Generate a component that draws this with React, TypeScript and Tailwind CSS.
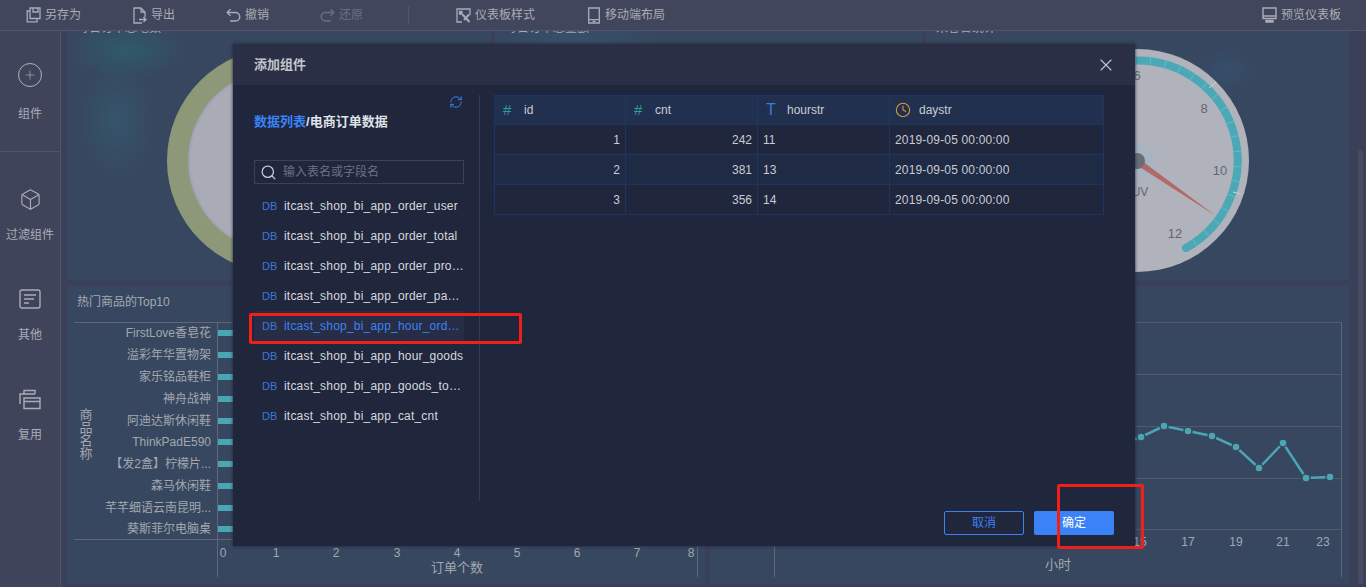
import { Box, Clock, Plus, RefreshCw, Search, X } from "lucide-react";

const FONT = "font-['Liberation_Sans','Noto_Sans_CJK_SC',sans-serif]";

const SaveIcon = () => (
  <svg width="15" height="16" viewBox="0 0 15 16" fill="none" stroke="currentColor" strokeWidth="1.3">
    <path d="M4 1h10v10.5H4z" />
    <path d="M4 4H1.2v10.8h9.8V11.5" />
    <path d="M7 1v4h5V1" />
  </svg>
);

const ExportIcon = () => (
  <svg width="14" height="17" viewBox="0 0 14 17" fill="none" stroke="currentColor" strokeWidth="1.3">
    <path d="M8 1H1v15h8M8 1l4 4v5M8 1v4h4" />
    <path d="M6 12.5h7M10.5 10l2.5 2.5-2.5 2.5" />
  </svg>
);

const UndoIcon = ({ flip }: { flip?: boolean }) => (
  <svg width="15" height="15" viewBox="0 0 15 15" fill="none" stroke="currentColor" strokeWidth="1.4" className={flip ? "-scale-x-100" : ""}>
    <path d="M1.5 4.5h8a4 4 0 0 1 0 8.5H4" />
    <path d="M4.5 1.2 1.2 4.5l3.3 3.3" />
  </svg>
);

const StyleIcon = () => (
  <svg width="15" height="15" viewBox="0 0 15 15" fill="none" stroke="currentColor" strokeWidth="1.3">
    <path d="M6 14H1V1h13v6" />
    <path d="M3.5 3.5h2.5v2.5H3.5z" fill="currentColor" />
    <path d="M6.5 6.5 13.5 14M13 6.5 8 12" strokeWidth="2" />
  </svg>
);

const MobileIcon = () => (
  <svg width="14" height="17" viewBox="0 0 14 17" fill="none" stroke="currentColor" strokeWidth="1.3">
    <path d="M1.7 1h10.6v15H1.7zM1.7 12.6h10.6M5.5 14.4h3" />
  </svg>
);

const MonitorIcon = () => (
  <svg width="15" height="16" viewBox="0 0 15 16" fill="none" stroke="currentColor" strokeWidth="1.4">
    <path d="M1 1h13v10.5H1z" />
    <path d="M1 9h13M4 13.5h7v1.5H4z" />
  </svg>
);

const OtherIcon = () => (
  <svg width="22" height="20" viewBox="0 0 22 20" fill="none" stroke="currentColor" strokeWidth="1.4">
    <rect x="1" y="1" width="20" height="18" rx="2" />
    <path d="M5 6h12M5 10h10M5 14h5" />
  </svg>
);

const ReuseIcon = () => (
  <svg width="22" height="21" viewBox="0 0 22 21" fill="none" stroke="currentColor" strokeWidth="1.4">
    <path d="M5 5V1.5h11V5M1 15V5h15M5 19.5V9h16v10.5zM5 12.5h16" />
  </svg>
);

const toolbarItems = [
  { label: "另存为", icon: <SaveIcon />, cls: "ml-[26px]" },
  { label: "导出", icon: <ExportIcon />, cls: "ml-[52px]" },
  { label: "撤销", icon: <UndoIcon />, cls: "ml-[51px]" },
  { label: "还原", icon: <UndoIcon flip />, cls: "ml-[51px] opacity-40" },
];

const sideItems = [
  { label: "过滤组件", icon: <Box size={23} strokeWidth={1.2} /> },
  { label: "其他", icon: <OtherIcon /> },
  { label: "复用", icon: <ReuseIcon /> },
];

const tables = [
  "itcast_shop_bi_app_order_user",
  "itcast_shop_bi_app_order_total",
  "itcast_shop_bi_app_order_product",
  "itcast_shop_bi_app_order_payment",
  "itcast_shop_bi_app_hour_orders",
  "itcast_shop_bi_app_hour_goods",
  "itcast_shop_bi_app_goods_top10",
  "itcast_shop_bi_app_cat_cnt",
];

const rows = [
  ["1", "242", "11", "2019-09-05 00:00:00"],
  ["2", "381", "13", "2019-09-05 00:00:00"],
  ["3", "356", "14", "2019-09-05 00:00:00"],
];

const goods = [
  ["FirstLove香皂花", 333],
  ["溢彩年华置物架", 355],
  ["家乐铭品鞋柜", 377],
  ["神舟战神", 399],
  ["阿迪达斯休闲鞋", 421],
  ["ThinkPadE590", 442],
  ["【发2盒】柠檬片...", 464],
  ["森马休闲鞋", 486],
  ["芊芊细语云南昆明...", 508],
  ["葵斯菲尔电脑桌", 529],
] as const;

const xTicks = [[223, "0"], [276, "1"], [336, "2"], [397, "3"], [457, "4"], [517, "5"], [577, "6"], [637, "7"], [691, "8"]] as const;
const hourTicks = [[1140, "15"], [1188, "17"], [1236, "19"], [1283, "21"], [1323, "23"]] as const;
const linePoints = [[1116, 446], [1141, 437], [1164, 426], [1188, 431], [1212, 436], [1236, 447], [1259, 468], [1283, 443], [1306, 478], [1330, 477]];

const Panel = ({ title, className, children }: { title: string; className?: string; children: React.ReactNode }) => (
  <div className={`overflow-hidden bg-[#37475f] ${className ?? ""}`}>
    <div className="pl-[10px] text-xs leading-4 text-[#a5a9b3]">{title}</div>
    {children}
  </div>
);

const BarChart = () => (
  <svg width="638" height="264" viewBox="67 320 638 264" className="block" fontSize="12" fill="#a3a7b0">
    <path d="M74 322.5H697M74 539.5H697M217.5 322V577M697.5 322V577" stroke="#5f6675" fill="none" />
    {goods.map(([name, y]) => (
      <g key={name}>
        <text x="211" y={y + 4} textAnchor="end">{name}</text>
        <rect x="218" y={y - 3} width="30" height="6" fill="#4ba6b4" />
      </g>
    ))}
    {["商", "品", "名", "称"].map((c, i) => (
      <text key={c} x="86" y={419 + i * 13} textAnchor="middle" fontSize="13">{c}</text>
    ))}
    {xTicks.map(([x, t]) => (
      <text key={t} x={x} y="557" textAnchor="middle" fontSize="12">{t}</text>
    ))}
    <text x="457" y="572" textAnchor="middle" fontSize="13">订单个数</text>
  </svg>
);

const LineChart = () => (
  <svg width="639" height="264" viewBox="710 320 639 264" className="block" fontSize="12" fill="#a3a7b0">
    <path d="M774 322.5H1341M774 374.5H1341M774 426.5H1341M774 478.5H1341M774 529.5H1341" stroke="#545a69" fill="none" />
    <path d="M774.5 322V577M1341.5 322V577" stroke="#5f6675" fill="none" />
    <polyline points={linePoints.map((p) => p.join(",")).join(" ")} fill="none" stroke="#4ba6b4" strokeWidth="2.5" />
    {linePoints.map(([x, y]) => (
      <circle key={x} cx={x} cy={y} r="4" fill="#4ba6b4" stroke="#3a4660" strokeWidth="1.5" />
    ))}
    {hourTicks.map(([x, t]) => (
      <text key={t} x={x} y="546" textAnchor="middle">{t}</text>
    ))}
    <text x="1058" y="569" textAnchor="middle" fontSize="13">小时</text>
  </svg>
);

const DonutChart = () => (
  <svg width="424" height="244" viewBox="67 36 424 244" className="block">
    <circle cx="279.6" cy="160.5" r="112.6" fill="#8c9877" />
    <circle cx="279.6" cy="160.5" r="90.5" fill="#a9abb7" stroke="#a2a4b6" strokeWidth="2" />
  </svg>
);

const GaugeChart = () => (
  <svg width="423" height="244" viewBox="926 36 423 244" className="block" fill="#64666f" fontSize="13">
    <circle cx="1137.5" cy="160.5" r="111.5" fill="#b0b2bc" />
    <path d="M1135 60.5A100 100 0 0 1 1186 248" fill="none" stroke="#4ba8b6" strokeWidth="8" strokeLinecap="round" />
    <path d="M1135 60.5A100 100 0 0 1 1186 248" fill="none" stroke="#6db6c2" strokeWidth="8" strokeDasharray="1 14" />
    <path d="M1209 88l7-6M1233 192l8 2" stroke="#c6d8dc" strokeWidth="1" />
    <circle cx="1137" cy="161" r="18" fill="#a8b4c2" />
    <path d="M1135 164 1216 216 1138 158z" fill="#b26a66" />
    <circle cx="1137" cy="161" r="8" fill="#696c77" />
    <text x="1137" y="80" textAnchor="middle">6</text>
    <text x="1204" y="113" textAnchor="middle">8</text>
    <text x="1220" y="175" textAnchor="middle">10</text>
    <text x="1175" y="238" textAnchor="middle">12</text>
    <text x="1140" y="196" textAnchor="middle" fontSize="12">UV</text>
  </svg>
);

const Modal = () => (
  <div className="absolute left-[233px] top-[44px] flex h-[502px] w-[902px] flex-col bg-[#20263c] shadow-[0_0_3px_#1c2236]">
    <div className="flex h-[41px] shrink-0 items-center justify-between bg-[#2a2f45] pl-[21px] pr-[19px]">
      <span className="text-[13px] font-bold text-[#c3c6ce]">添加组件</span>
      <X size={20} strokeWidth={1.3} className="text-[#c3c6ce]" />
    </div>
    <div className="flex flex-1 pt-[10px]">
      <div className="flex h-[406px] w-[247px] shrink-0 flex-col border-r border-[#343b52] pl-[21px] pr-[15px]">
        <div className="flex h-[16px] justify-end pr-[1px]">
          <RefreshCw size={14} strokeWidth={1.6} className="text-[#3b82f6]" />
        </div>
        <div className="mt-[3px] h-[16px] text-[13px] font-bold leading-4 text-[#dfe2e8]">
          <span className="text-[#3b82f6]">数据列表</span>/电商订单数据
        </div>
        <div className="mt-[30px] flex h-[24px] items-center border border-[#3a4158] pl-[5px]">
          <Search size={17} strokeWidth={1.8} className="text-[#c8cbd2]" />
          <span className="ml-[6px] text-xs text-[#6d7283]">输入表名或字段名</span>
        </div>
        <div className="mt-[7px] flex flex-col">
          {tables.map((t, i) => (
            <div key={t} className={`flex h-[30px] items-center pl-[8px] ${i === 4 ? "bg-[#272d44] text-[#3b82f6]" : "text-[#d5d8de]"}`}>
              <span className="w-[22px] shrink-0 text-[11px] text-[#3b78d8]">DB</span>
              <span className="truncate text-xs tracking-[0.2px]">{t}</span>
            </div>
          ))}
        </div>
      </div>
      <div className="ml-[14px] flex-1">
        <div className="w-[610px] border border-[#1e3560] text-xs text-[#c8ccd4]">
          <div className="grid h-[28px] grid-cols-[131px_132px_132px_1fr] bg-[#22304f]">
            <div className="flex items-center border-r border-[#1e3560] pl-[8px]"><span className="w-[21px] text-[15px] text-[#2a9d96]">#</span>id</div>
            <div className="flex items-center border-r border-[#1e3560] pl-[8px]"><span className="w-[21px] text-[15px] text-[#2a9d96]">#</span>cnt</div>
            <div className="flex items-center border-r border-[#1e3560] pl-[8px]"><span className="w-[21px] text-base text-[#3b78d8]">T</span>hourstr</div>
            <div className="flex items-center pl-[5px]"><Clock size={16} strokeWidth={1.6} className="mr-[8px] text-[#e3973a]" />daystr</div>
          </div>
          {rows.map((row, i) => (
            <div key={row[0]} className={`grid h-[30px] grid-cols-[131px_132px_132px_1fr] border-t border-[#1e3560] ${i === 1 ? "bg-[#1f2a44]" : ""}`}>
              <div className="flex items-center justify-end border-r border-[#1e3560] pr-[5px]">{row[0]}</div>
              <div className="flex items-center justify-end border-r border-[#1e3560] pr-[5px]">{row[1]}</div>
              <div className="flex items-center border-r border-[#1e3560] pl-[5px]">{row[2]}</div>
              <div className="flex items-center pl-[5px] tracking-[0.16px]">{row[3]}</div>
            </div>
          ))}
        </div>
      </div>
    </div>
    <div className="flex h-[45px] shrink-0 justify-end gap-[10px] pr-[21px] pt-[10px]">
      <button className="h-[24px] w-[80px] rounded-[2px] border border-[#3b82f6] text-xs text-[#3b82f6]">取消</button>
      <button className="h-[24px] w-[80px] rounded-[2px] bg-[#3b82f6] text-xs text-white">确定</button>
    </div>
  </div>
);

export default function App() {
  return (
    <div className={`relative flex h-[587px] w-[1366px] flex-col overflow-hidden bg-[#3a4058] text-xs ${FONT}`}>
      <header className="z-10 flex h-[31px] shrink-0 items-center border-b border-[#50546c] bg-[#42465c] text-[#a9acb6]">
        {toolbarItems.map((item) => (
          <div key={item.label} className={`flex items-center gap-[4px] ${item.cls}`}>
            {item.icon}
            <span>{item.label}</span>
          </div>
        ))}
        <div className="ml-[45px] h-[18px] w-px bg-[#50546c]" />
        <div className="ml-[47px] flex items-center gap-[4px]"><StyleIcon /><span>仪表板样式</span></div>
        <div className="ml-[52px] flex items-center gap-[4px]"><MobileIcon /><span>移动端布局</span></div>
        <div className="ml-auto mr-[25px] flex items-center gap-[4px]"><MonitorIcon /><span>预览仪表板</span></div>
      </header>
      <div className="flex min-h-0 flex-1">
        <aside className="w-[61px] shrink-0 border-r border-[#50546c] bg-[#40445a] pt-[21px] text-[#a9acb6]">
          <div className="flex h-[100px] flex-col items-center border-b border-[#50546c]">
            <div className="flex h-[46px] items-center justify-center">
              <span className="flex h-6 w-6 items-center justify-center rounded-full border border-[#aeb1bb]"><Plus size={14} strokeWidth={1.2} /></span>
            </div>
            <div className="mt-[8px] leading-4">组件</div>
          </div>
          <div className="mt-[24px]">
            {sideItems.map((item) => (
              <div key={item.label} className="flex h-[100px] flex-col items-center">
                <div className="flex h-[46px] items-center justify-center">{item.icon}</div>
                <div className="mt-[5px] leading-4">{item.label}</div>
              </div>
            ))}
          </div>
        </aside>
        <main className="min-w-0 flex-1 overflow-hidden pl-[6px]">
          <div className="-mt-[11px] grid grid-cols-[424px_427px_423px] gap-x-[4px]">
            <Panel title="每日订单总笔数" className="bg-[radial-gradient(ellipse_60px_30px_at_60px_30px,#2f5a6a,transparent),radial-gradient(ellipse_40px_60px_at_50px_100px,#34556a,transparent)]"><DonutChart /></Panel>
            <Panel title="每日订单总金额" className="bg-[radial-gradient(ellipse_90px_40px_at_80px_20px,#37506a,transparent)]"><div className="h-[244px]" /></Panel>
            <Panel title="来客台统计" className="bg-[radial-gradient(ellipse_30px_22px_at_300px_50px,#364f6c,transparent)]"><GaugeChart /></Panel>
          </div>
          <div className="mt-[6px] grid grid-cols-[638px_639px] gap-x-[5px]">
            <Panel title="热门商品的Top10" className="pt-[8px]"><div className="h-[10px]" /><BarChart /></Panel>
            <Panel title="" className="pt-[34px]"><LineChart /></Panel>
          </div>
        </main>
      </div>
      <Modal />
      <div className="absolute left-[249px] top-[313px] h-[31px] w-[273px] rounded-[2px] border-[3px] border-[#f01f1a]" />
      <div className="absolute left-[1057px] top-[484px] h-[65px] w-[87px] rounded-[2px] border-[3px] border-[#f01f1a]" />
      <div className="absolute left-[1358px] top-[150px] h-[434px] w-[5px] rounded-full bg-[#474b62]" />
    </div>
  );
}
